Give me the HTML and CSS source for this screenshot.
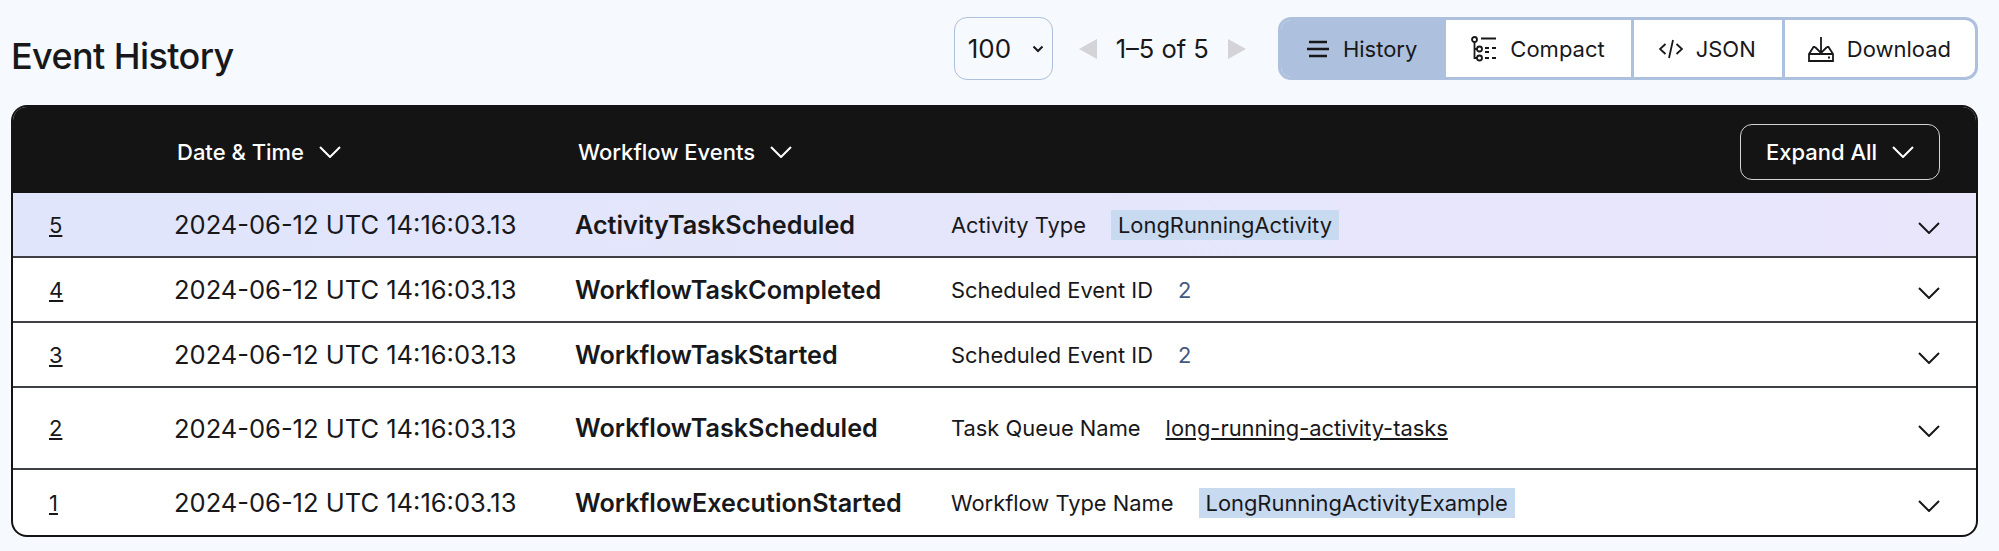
FILE: index.html
```html
<!DOCTYPE html>
<html lang="en">

<head>
    <meta charset="UTF-8">
    <meta name="viewport" content="width=device-width, initial-scale=1.0">
    <title>Event History</title>
    <link rel="stylesheet" href="styles.css">
</head>

<body>
    <div class="top">
        <h1 class="title">Event History</h1>
        <div class="controls">
            <div class="page-size">
                <span>100</span>
                <svg class="select-arrow" viewBox="0 0 12 8"><path d="M1.5 1.5 6 6l4.500-4.500"/></svg>
            </div>
            <div class="pager">
                <span class="arrow arrow-left"></span>
                <span class="range">1–5 of 5</span>
                <span class="arrow arrow-right"></span>
            </div>
            <div class="tabs">
                <div class="tab tab-active">
                    <svg class="icon icon-lines" width="24" height="18" viewBox="0 0 24 18"><path d="M3 2h18M1 9h22M3 16h18"/></svg>
                    History
                </div>
                <div class="tab">
                    <svg class="icon" width="26" height="26" viewBox="0 0 26 26"><circle cx="3.500" cy="3.500" r="2.500"/><circle cx="8.500" cy="13" r="2.500"/><circle cx="8.500" cy="22" r="2.500"/><path d="M3.500 6v16H6M3.500 13H6M10 2.500h15M14 12h4M21 12h4M14 16h4M14 22h4M21 22h4"/></svg>
                    Compact
                </div>
                <div class="tab">
                    <svg class="icon" width="24" height="20" viewBox="0 0 24 20"><path d="M6.500 5 1 10l5.500 5M17.500 5l5.500 5-5.500 5M14 1 10 19"/></svg>
                    JSON
                </div>
                <div class="tab">
                    <svg class="icon" width="26" height="26" viewBox="0 0 26 26"><path d="M13 1v16M7 11l6 6 6-6M7 11H5.500L1 18v7h24v-7l-4.500-7H19M1 18h24"/><path d="M20 21.500h2"/></svg>
                    Download
                </div>
            </div>
        </div>
    </div>

    <div class="card">
        <div class="row head">
            <span></span>
            <span class="head-cell">Date &amp; Time
                <svg class="chev" viewBox="0 0 22 12"><path d="M1 1l10 10L21 1"/></svg>
            </span>
            <span class="head-cell">Workflow Events
                <svg class="chev" viewBox="0 0 22 12"><path d="M1 1l10 10L21 1"/></svg>
            </span>
            <div class="expand">Expand All
                <svg class="chev" viewBox="0 0 22 12"><path d="M1 1l10 10L21 1"/></svg>
            </div>
        </div>

        <div class="row item item-new">
            <a class="num">5</a>
            <span class="date">2024-06-12 UTC 14:16:03.13</span>
            <b class="name">ActivityTaskScheduled</b>
            <span class="detail"><span>Activity Type</span><span class="pill">LongRunningActivity</span></span>
            <svg class="chev chev-row" viewBox="0 0 22 12"><path d="M1 1l10 10L21 1"/></svg>
        </div>
        <div class="row item">
            <a class="num">4</a>
            <span class="date">2024-06-12 UTC 14:16:03.13</span>
            <b class="name">WorkflowTaskCompleted</b>
            <span class="detail"><span>Scheduled Event ID</span><span class="val-id">2</span></span>
            <svg class="chev chev-row" viewBox="0 0 22 12"><path d="M1 1l10 10L21 1"/></svg>
        </div>
        <div class="row item">
            <a class="num">3</a>
            <span class="date">2024-06-12 UTC 14:16:03.13</span>
            <b class="name">WorkflowTaskStarted</b>
            <span class="detail"><span>Scheduled Event ID</span><span class="val-id">2</span></span>
            <svg class="chev chev-row" viewBox="0 0 22 12"><path d="M1 1l10 10L21 1"/></svg>
        </div>
        <div class="row item item-tall">
            <a class="num">2</a>
            <span class="date">2024-06-12 UTC 14:16:03.13</span>
            <b class="name">WorkflowTaskScheduled</b>
            <span class="detail"><span>Task Queue Name</span><a class="val-link">long-running-activity-tasks</a></span>
            <svg class="chev chev-row" viewBox="0 0 22 12"><path d="M1 1l10 10L21 1"/></svg>
        </div>
        <div class="row item item-last">
            <a class="num">1</a>
            <span class="date">2024-06-12 UTC 14:16:03.13</span>
            <b class="name">WorkflowExecutionStarted</b>
            <span class="detail"><span>Workflow Type Name</span><span class="pill">LongRunningActivityExample</span></span>
            <svg class="chev chev-row" viewBox="0 0 22 12"><path d="M1 1l10 10L21 1"/></svg>
        </div>
    </div>
</body>

</html>
```
FILE: styles.css
```css
* {
    margin: 0;
    padding: 0;
    box-sizing: border-box;
}

body {
    padding: 17px 21px 0 11px;
    background-color: #f6f9fd;
    color: #18181b;
    font-family: Inter, "Liberation Sans", sans-serif;
    font-size: 22px;
}

svg {
    flex: none;
    fill: none;
    stroke: currentColor;
}

.top {
    display: flex;
    justify-content: space-between;
    height: 63px;
    margin-bottom: 25px;
}

.title {
    padding-top: 17px;
    font-size: 36px;
    font-weight: 500;
    letter-spacing: -0.6px;
    line-height: 44px;
}

.controls {
    display: flex;
    align-items: center;
}

.page-size {
    display: flex;
    align-items: center;
    justify-content: space-between;
    width: 99px;
    height: 63px;
    padding: 0 8px 0 13px;
    border: 1.5px solid #adc0dd;
    border-radius: 13px;
    font-size: 26px;
}

.select-arrow {
    width: 12px;
    height: 8px;
    stroke-width: 2px;
}

.pager {
    display: flex;
    align-items: center;
    gap: 19px;
    margin: 0 32px 0 26px;
}

.range {
    font-size: 25.500px;
}

.arrow {
    width: 0;
    height: 0;
    border-top: 10px solid transparent;
    border-bottom: 10px solid transparent;
}

.arrow-left {
    border-right: 18px solid #d4d4d8;
}

.arrow-right {
    border-left: 18px solid #d4d4d8;
}

.tabs {
    display: flex;
    height: 63px;
    border: 3px solid #adc0dd;
    border-radius: 13px;
    background-color: #fff;
    overflow: hidden;
}

.tab {
    display: flex;
    align-items: center;
    gap: 13px;
    padding: 0 26px 0 25px;
    border-left: 3px solid #adc0dd;
}

.tab:first-child {
    border-left: 0;
}

.tab:last-child {
    padding-right: 24px;
    padding-left: 23px;
}

.tab-active {
    background-color: #adc0dd;
}

.icon {
    stroke-width: 1.8px;
}

.icon-lines {
    stroke-width: 2.500px;
}

.card {
    border: 2px solid #141414;
    border-radius: 16px;
    background-color: #fff;
    overflow: hidden;
}

.row {
    display: grid;
    grid-template-columns: 161px 401px 376px 1fr 58px;
    align-items: center;
}

.head {
    grid-template-columns: 161px 401px 1fr 200px;
    height: 86px;
    padding-top: 4px;
    background-color: #141414;
    color: #fff;
    font-weight: 500;
}

.head-cell {
    display: flex;
    align-items: center;
    gap: 15px;
    padding-left: 3px;
}

.chev {
    width: 22px;
    height: 12px;
    stroke-width: 2px;
}

.expand {
    display: flex;
    align-items: center;
    justify-content: center;
    gap: 15px;
    justify-self: end;
    width: 200px;
    height: 56px;
    margin-right: 36px;
    border: 1.5px solid #d4d4d8;
    border-radius: 12px;
}

.item {
    height: 65px;
    border-top: 2px solid #3f3f46;
}

.item-new {
    height: 63px;
    border-top: 0;
    background: linear-gradient(90deg, #e0e5fb, #e9e6fc);
}

.item-tall {
    height: 82px;
}

.item-last {
    height: 67px;
}

.num {
    padding-left: 36px;
    text-decoration: underline;
}

.date {
    font-size: 25.500px;
}

.name {
    font-size: 25.200px;
    font-weight: 600;
}

.detail {
    display: flex;
    align-items: center;
    gap: 25px;
    font-size: 21.900px;
}

.pill {
    padding: 2px 7px;
    background-color: #c8daf0;
}

.val-id {
    color: #44597f;
}

.val-link {
    text-decoration: underline;
}

.chev-row {
    margin-top: 6px;
    justify-self: start;
}
```
